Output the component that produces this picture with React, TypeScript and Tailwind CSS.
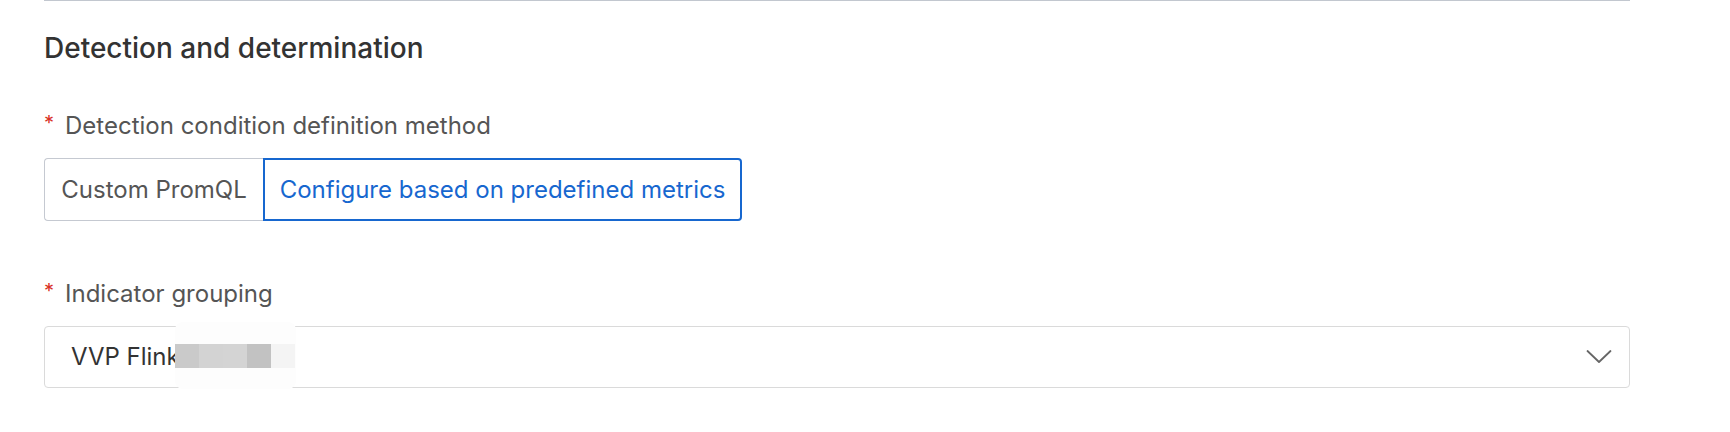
const font = { fontFamily: "Inter, 'Noto Sans', sans-serif" };

function Label({ text }: { text: string }) {
  return (
    <div className="flex h-8 items-center text-[24px] leading-8 text-[#555]">
      <span className="mr-[11px] -mt-[6px] text-[20px] leading-none text-[#d93026]">*</span>
      <span>{text}</span>
    </div>
  );
}

export default function App() {
  return (
    <div className="min-h-[432px] bg-white px-[44px]" style={font}>
      <div className="w-[1586px]">
        <div className="h-px bg-[#c2c7cf]" />

        <h2 className="mt-[31px] h-8 text-[28px] font-medium leading-8 text-[#333]">
          Detection and determination
        </h2>

        <div className="mt-[46px]">
          <Label text="Detection condition definition method" />
        </div>

        <div className="mt-[16px] flex h-[63px] text-[24px]">
          <button className="flex w-[219px] items-center justify-center rounded-l-[4px] border border-r-0 border-[#c5c9d1] bg-white text-[#555]">
            Custom PromQL
          </button>
          <button className="flex w-[479px] items-center justify-center rounded-r-[4px] border-2 border-[#1767cf] bg-white text-[#1767cf]">
            Configure based on predefined metrics
          </button>
        </div>

        <div className="mt-[57px]">
          <Label text="Indicator grouping" />
        </div>

        <div className="relative mt-[16px] flex h-[62px] items-center justify-between rounded-[4px] border border-[#dadada] bg-white pl-[26px] pr-[17px]">
          <span className="text-[24px] text-[#333]">VVP Flink</span>
          <svg width="26" height="16" viewBox="0 0 26 16" fill="none" className="text-[#666]">
            <polyline points="1.5,2 13,13 24.5,2" stroke="currentColor" strokeWidth="1.8" strokeLinecap="round" strokeLinejoin="round" />
          </svg>

          {/* masked part of the group name */}
          <div className="absolute left-[130px] -top-[5px] flex h-[67px] w-[121px] items-center rounded-lg bg-[#fdfdfd]">
            <div className="flex h-[24px]">
              <div className="w-[24px] bg-[#cacaca]" />
              <div className="w-[24px] bg-[#d3d3d3]" />
              <div className="w-[24px] bg-[#d4d4d4]" />
              <div className="w-[24px] bg-[#c2c2c2]" />
              <div className="w-[24px] bg-[#f4f4f4]" />
            </div>
          </div>
        </div>
      </div>
    </div>
  );
}
